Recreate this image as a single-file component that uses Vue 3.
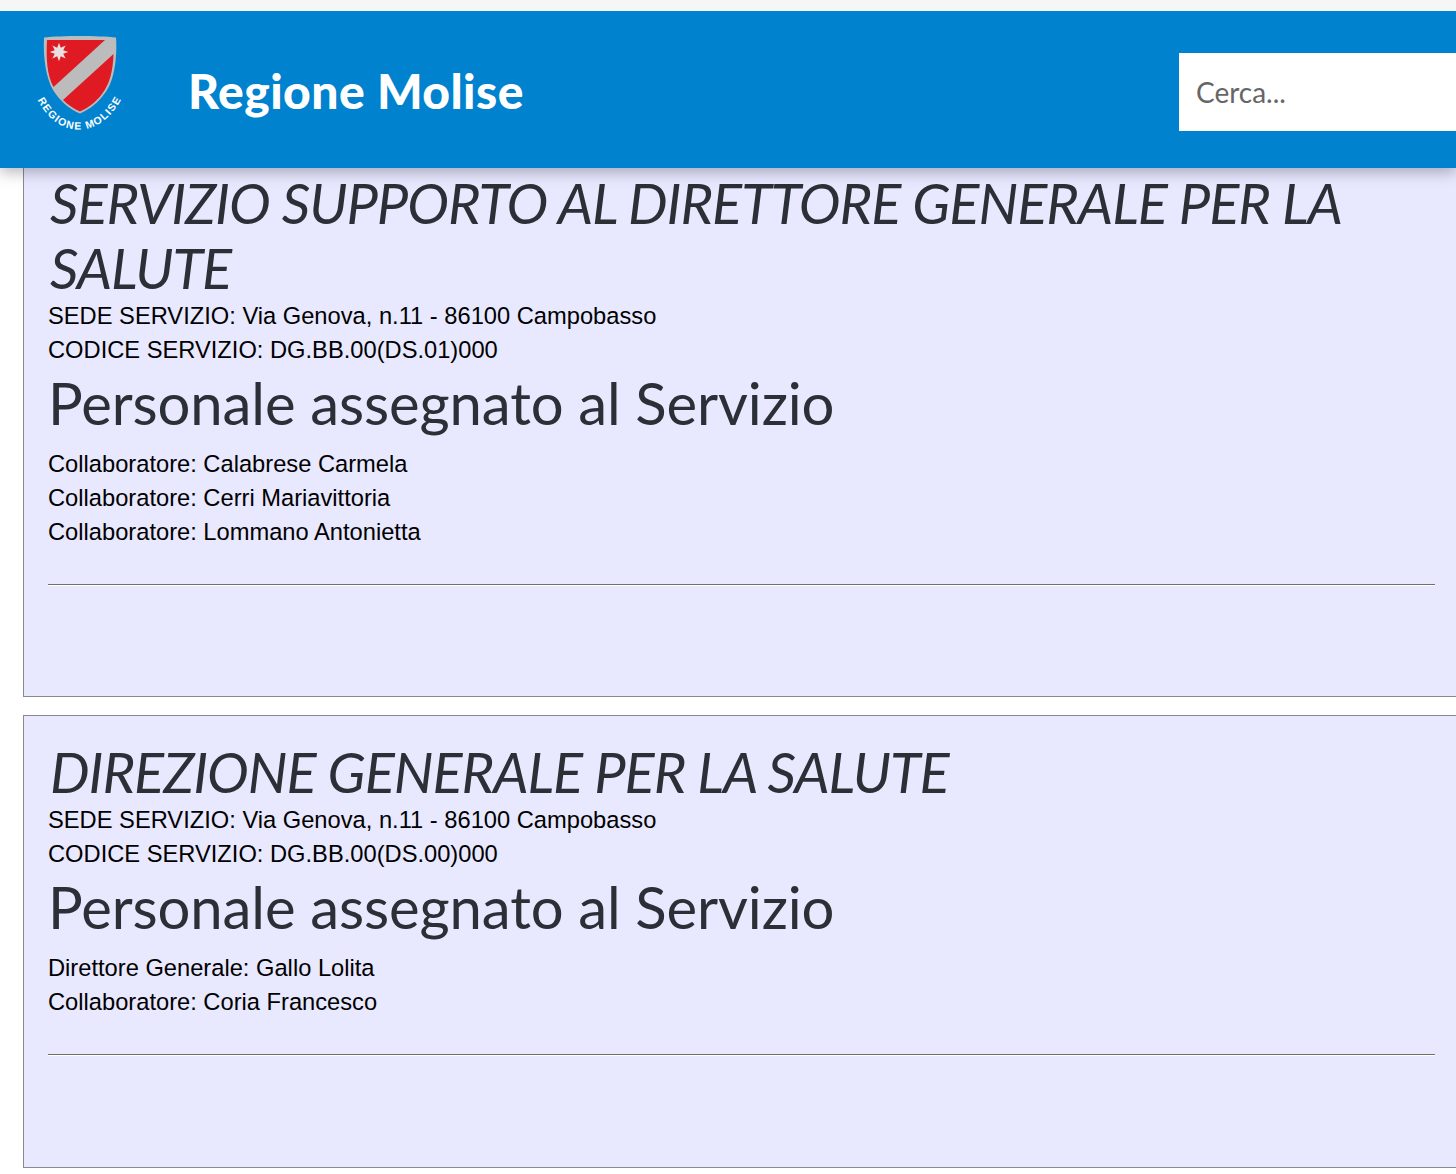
<script setup>
const cards = [
  {
    title: 'SERVIZIO SUPPORTO AL DIRETTORE GENERALE PER LA SALUTE',
    sede: 'SEDE SERVIZIO: Via Genova, n.11 - 86100 Campobasso',
    codice: 'CODICE SERVIZIO: DG.BB.00(DS.01)000',
    people: ['Collaboratore: Calabrese Carmela', 'Collaboratore: Cerri Mariavittoria', 'Collaboratore: Lommano Antonietta'],
    cls: 'first'
  },
  {
    title: 'DIREZIONE GENERALE PER LA SALUTE',
    sede: 'SEDE SERVIZIO: Via Genova, n.11 - 86100 Campobasso',
    codice: 'CODICE SERVIZIO: DG.BB.00(DS.00)000',
    people: ['Direttore Generale: Gallo Lolita', 'Collaboratore: Coria Francesco'],
    cls: 'second'
  }
]
</script>

<template>
  <div class="page">
    <div class="topbar"></div>
    <header class="header">
      <svg class="logo" viewBox="33 30 100 105" width="100" height="105">
        <defs>
          <path id="arc" d="M37 99 C 48 120, 62 129.500, 79 129.500 C 96 129.500, 112 118, 123 96" fill="none" />
        </defs>
        <path d="M44 37.5 C 62 35.5, 98 35.5, 116 37.5 C 117.5 58, 114 82, 105 93 C 98 103, 90 109, 80 113.5 C 69 109, 60 101, 53 90 C 46 78, 43 58, 44 37.5 Z" fill="#bcbcbc" />
        <path d="M47 40 L105 40 L53.5 87 C 47 76, 46 58, 47 40 Z" fill="#e01a22" />
        <path d="M113.5 54 C 113 70, 110 84, 102 94 C 96 102, 88 108, 80 111.5 C 73.500 108.500, 68 105, 63 100 Z" fill="#e01a22" />
        <path d="M59 42.700 L60.800 47.800 L65.600 45.400 L63.250 50.200 L68.300 52 L63.250 53.800 L65.600 58.600 L60.800 56.250 L59 61.300 L57.200 56.250 L52.400 58.600 L54.750 53.800 L49.700 52 L54.750 50.200 L52.400 45.400 L57.200 47.800 Z" fill="#e8dfe0" />
        <text class="logo-text"><textPath href="#arc" startOffset="1">REGIONE MOLISE</textPath></text>
      </svg>
      <div class="brand">Regione Molise</div>
      <div class="search">Cerca...</div>
    </header>
    <main class="main">
      <section v-for="c in cards" :key="c.title" class="card" :class="c.cls">
        <h2 class="title">{{ c.title }}</h2>
        <div class="line">{{ c.sede }}</div>
        <div class="line">{{ c.codice }}</div>
        <h3 class="sub">Personale assegnato al Servizio</h3>
        <div v-for="p in c.people" :key="p" class="line">{{ p }}</div>
        <hr class="rule" />
      </section>
    </main>
  </div>
</template>

<style>
html, body { margin: 0; background: #fff; overflow: hidden; }
</style>

<style scoped>
.page { width: 1456px; height: 1174px; overflow: hidden; background: #fff; display: flex; flex-direction: column; }
.topbar { height: 11px; background: #f6f6f6; flex: none; position: relative; z-index: 3; }
.header {
  height: 157px; flex: none; box-sizing: border-box; padding-top: 4px; background: #0082cf; display: flex; align-items: center;
  position: relative; z-index: 2; box-shadow: 0 4px 14px rgba(40, 40, 60, .35);
}
.logo { margin-left: 33px; margin-top: 15px; align-self: flex-start; flex: none; }
.brand {
  margin-left: 55px; margin-top: -2px; color: #fff; font: 900 48px/1 "Lato", sans-serif; letter-spacing: .45px; flex: none; white-space: nowrap;
}
.search {
  margin-left: auto; width: 277px; height: 78px; box-sizing: border-box; background: #fff;
  padding-left: 17px; display: flex; align-items: center;
  color: #666; font: 400 28px "Lato", sans-serif;
}
.main { margin-left: 23px; width: 1460px; display: flex; flex-direction: column; gap: 18px; }
.card {
  box-sizing: border-box; background: #e8e8ff; border: 1px solid #8a8a8a; padding-left: 24px; padding-right: 28px;
}
.first { height: 529px; border-top: 0; padding-top: 2px; }
.second { height: 453px; padding-top: 23px; }
.title {
  margin: 0 0 -1px 2px; color: #2b2f36; font: italic 400 56px/65px "Lato", sans-serif; letter-spacing: -1.05px;
}
.sub { margin: 0; color: #2b2f36; font: 400 58px/65px "Lato", sans-serif; letter-spacing: -.1px; padding: 3px 0 12px; }
.line { color: #000; font: 400 23.7px/34px "Liberation Sans", sans-serif; }
.rule { margin: 35px 0 0; height: 0; border: 0; border-top: 1px solid #6f6f6f; border-bottom: 1px solid #fff; width: 1387px; }
.logo-text { font: 700 10.5px "Liberation Sans", sans-serif; fill: #fff; letter-spacing: 1.25px; }
</style>
